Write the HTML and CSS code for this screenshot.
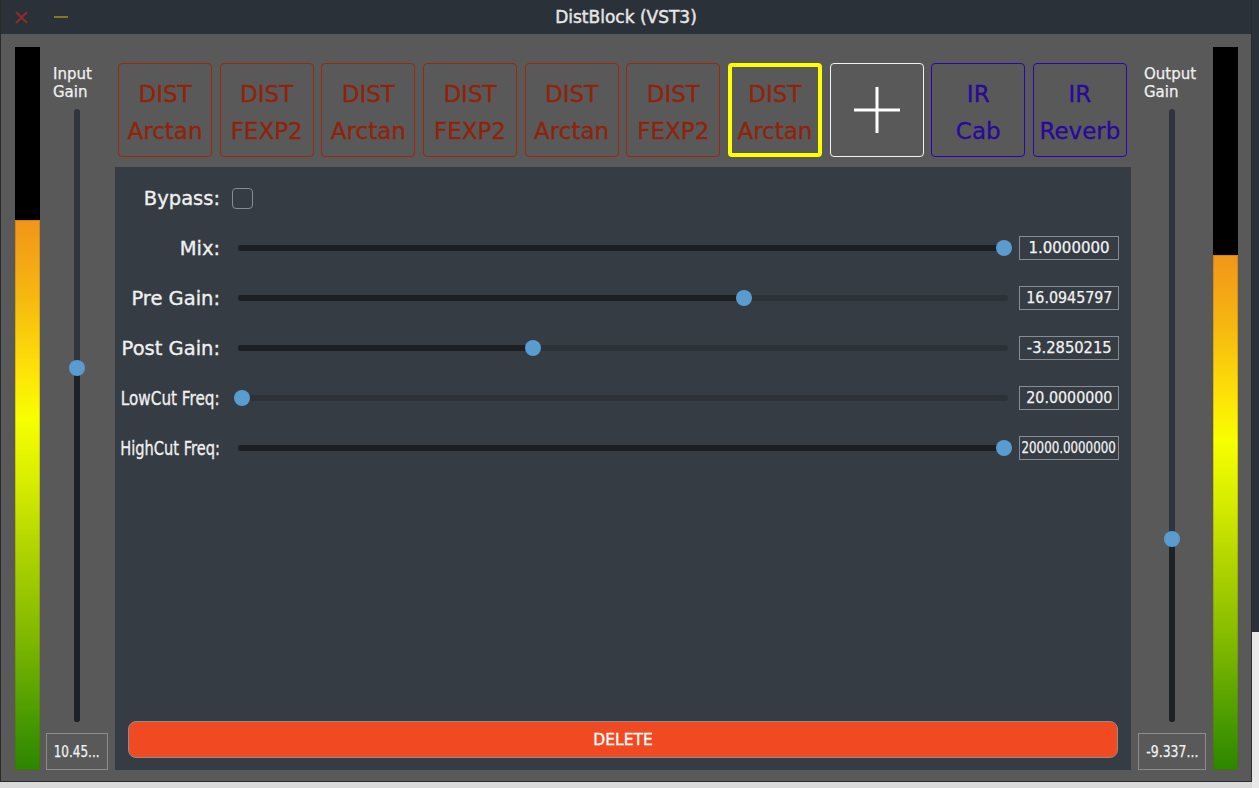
FILE: index.html
```html
<!DOCTYPE html>
<html>
<head>
<meta charset="utf-8">
<title>DistBlock (VST3)</title>
<link rel="stylesheet" href="styles.css">
</head>
<body>
<div class="desktop">
  <div class="window">
    <div class="titlebar">
      <div class="tb-controls">
        <svg class="tb-close" width="13" height="13" viewBox="0 0 13 13"><path d="M1 1 L12 12 M12 1 L1 12" stroke="#8e2b2b" stroke-width="2" fill="none"/></svg>
        <span class="tb-min"></span>
      </div>
      <div class="tb-title">DistBlock (VST3)</div>
      <div></div>
    </div>
    <div class="content">
      <div class="meter"><div class="meter-fill" style="--level:0.761"></div></div>
      <div class="gain-col">
        <div class="gain-label">Input<br>Gain</div>
        <div class="vslider" style="--v:0.578">
          <div class="vtrack"><div class="vfill"></div></div>
          <div class="vthumb"></div>
        </div>
        <div class="gain-value"><span class="sq80">10.45...</span></div>
      </div>
      <div class="center">
        <div class="chain">
          <button class="mod dist">DIST<br>Arctan</button>
          <button class="mod dist">DIST<br>FEXP2</button>
          <button class="mod dist">DIST<br>Arctan</button>
          <button class="mod dist">DIST<br>FEXP2</button>
          <button class="mod dist">DIST<br>Arctan</button>
          <button class="mod dist">DIST<br>FEXP2</button>
          <button class="mod dist selected">DIST<br>Arctan</button>
          <button class="mod add"><svg width="48" height="48" viewBox="0 0 48 48"><path d="M24 1 V47 M1 24 H47" stroke="#ffffff" stroke-width="3" fill="none"/></svg></button>
          <button class="mod ir">IR<br>Cab</button>
          <button class="mod ir">IR<br>Reverb</button>
        </div>
        <div class="panel">
          <div class="row">
            <div class="plabel"><span>Bypass:</span></div>
            <div class="checkbox"></div>
          </div>
          <div class="row">
            <div class="plabel"><span>Mix:</span></div>
            <div class="hslider" style="--v:1"><div class="htrack"><div class="hfill"></div></div><div class="hthumb"></div></div>
            <div class="pvalue">1.0000000</div>
          </div>
          <div class="row">
            <div class="plabel"><span>Pre Gain:</span></div>
            <div class="hslider" style="--v:0.659"><div class="htrack"><div class="hfill"></div></div><div class="hthumb"></div></div>
            <div class="pvalue"><span class="sq95">16.0945797</span></div>
          </div>
          <div class="row">
            <div class="plabel"><span>Post Gain:</span></div>
            <div class="hslider" style="--v:0.382"><div class="htrack"><div class="hfill"></div></div><div class="hthumb"></div></div>
            <div class="pvalue"><span class="sq98">-3.2850215</span></div>
          </div>
          <div class="row">
            <div class="plabel"><span class="sq78">LowCut Freq:</span></div>
            <div class="hslider" style="--v:0"><div class="htrack"><div class="hfill"></div></div><div class="hthumb"></div></div>
            <div class="pvalue"><span class="sq95">20.0000000</span></div>
          </div>
          <div class="row">
            <div class="plabel"><span class="sq75">HighCut Freq:</span></div>
            <div class="hslider" style="--v:1"><div class="htrack"><div class="hfill"></div></div><div class="hthumb"></div></div>
            <div class="pvalue"><span class="sq79">20000.0000000</span></div>
          </div>
          <button class="delete">DELETE</button>
        </div>
      </div>
      <div class="gain-col right">
        <div class="gain-label">Output<br>Gain</div>
        <div class="vslider" style="--v:0.296">
          <div class="vtrack"><div class="vfill"></div></div>
          <div class="vthumb"></div>
        </div>
        <div class="gain-value"><span class="sq83">-9.337...</span></div>
      </div>
      <div class="meter right"><div class="meter-fill" style="--level:0.712"></div></div>
    </div>
  </div>
  <div class="side"><div class="side-dark"></div><div class="side-light"></div></div>
</div>
</body>
</html>
```

FILE: styles.css
```css
* { box-sizing: border-box; margin: 0; padding: 0; }
html, body { width: 100%; height: 100%; }
body {
  background: #dadada;
  font-family: "DejaVu Sans", "Liberation Sans", sans-serif;
  overflow: hidden;
}
.desktop { display: flex; align-items: flex-start; height: 788px; }

.window {
  width: 1252px;
  height: 782px;
  border: 1px solid #2a2a2a;
  border-top: 0;
  display: flex;
  flex-direction: column;
  background: #595959;
  flex: none;
}

.side { flex: 1; display: flex; flex-direction: column; height: 788px; }
.side-dark { height: 632px; background: #2b3138; }
.side-light { flex: 1; background: #e9e9e9; }

/* title bar */
.titlebar {
  height: 34px;
  background: #2b3139;
  display: grid;
  grid-template-columns: 1fr auto 1fr;
  align-items: center;
  flex: none;
}
.tb-controls { display: flex; align-items: center; padding-left: 14px; }
.tb-close { display: block; }
.tb-min { display: block; width: 14px; height: 2px; background: #7d7a26; margin-left: 26px; }
.tb-title { color: #e6e6e6; font-size: 17px; -webkit-text-stroke: 0.45px #e6e6e6; }

/* content */
.content {
  flex: 1;
  display: flex;
  padding: 13px 13px 11px 14px;
}

.meter {
  width: 25px;
  background: #000;
  display: flex;
  flex-direction: column;
  justify-content: flex-end;
  flex: none;
}
.meter.right { margin-left: 7px; }
.meter-fill {
  height: calc(var(--level) * 100%);
  background: linear-gradient(to bottom,
    #f2951a 0%, #f6b810 14%, #fde408 28%, #f8ff00 36%, #d6ec00 48%,
    #b0d400 60%, #7fb800 76%, #4c9c00 90%, #2c8600 100%);
  box-shadow: inset 0 0 0 1px rgba(120, 70, 0, 0.25);
}

.gain-col {
  width: 62px;
  margin-left: 6px;
  display: flex;
  flex-direction: column;
  flex: none;
}
.gain-col.right { width: 68px; margin-left: 7px; }
.gain-label {
  margin-top: 18px;
  padding-left: 7px;
  font-size: 15px;
  line-height: 18px;
  color: #f0f0f0;
  -webkit-text-stroke: 0.25px #f0f0f0;
}
.gain-col.right .gain-label { padding-left: 6px; }
.vslider {
  flex: 1;
  margin-top: 8px;
  position: relative;
  display: flex;
  justify-content: center;
}
.vtrack {
  width: 6px;
  height: 100%;
  border-radius: 3px;
  background: #2e353c;
  position: relative;
  overflow: hidden;
}
.vfill {
  position: absolute;
  left: 0; right: 0; bottom: 0;
  height: calc(4px + var(--v) * (100% - 8px));
  background: #1d2227;
}
.vthumb {
  position: absolute;
  left: 50%;
  margin-left: -8px;
  width: 16px;
  height: 16px;
  border-radius: 50%;
  background: #5a9bd0;
  top: calc(4px + (1 - var(--v)) * (100% - 8px) - 8px);
}
.gain-value {
  margin-top: 11px;
  height: 37px;
  border: 1px solid #8c8c8c;
  display: flex;
  align-items: center;
  justify-content: center;
  font-size: 15px;
  color: #f2f2f2;
  white-space: nowrap;
  -webkit-text-stroke: 0.25px #f2f2f2;
}

.sq80, .sq83, .sq79, .sq78, .sq75, .sq95, .sq98 { display: inline-block; white-space: nowrap; flex: none; }
.sq80 { transform: scaleX(0.8); }
.sq83 { transform: scaleX(0.83); }
.sq79 { transform: scaleX(0.79); }
.sq95 { transform: scaleX(0.95); }
.sq98 { transform: scaleX(0.98); }
.sq78 { transform: scaleX(0.78); transform-origin: right center; }
.sq75 { transform: scaleX(0.75); transform-origin: right center; }

/* center column */
.center {
  width: 1016px;
  margin-left: 7px;
  display: flex;
  flex-direction: column;
  flex: none;
}
.chain {
  margin-top: 16px;
  padding: 0 4px 0 3px;
  display: flex;
  justify-content: space-between;
  flex: none;
}
.mod {
  width: 94px;
  height: 94px;
  border-radius: 4px;
  background: transparent;
  font-family: "DejaVu Sans", "Liberation Sans", sans-serif;
  font-size: 23px;
  line-height: 37px;
  padding-top: 5px;
  display: flex;
  flex-direction: column;
  align-items: center;
  justify-content: center;
  text-align: center;
}
.mod.dist { border: 1px solid #98290f; color: #8f230c; -webkit-text-stroke: 0.3px #8f230c; }
.mod.selected { border: 4px solid #ffff00; }
.mod.add { border: 1px solid #f2f2f2; padding-top: 0; }
.mod.add svg { display: block; }
.mod.ir { border: 1px solid #2a04b4; color: #28099a; -webkit-text-stroke: 0.3px #28099a; }

.panel {
  flex: 1;
  margin-top: 10px;
  background: #353c44;
  display: flex;
  flex-direction: column;
  padding-top: 6px;
}
.row {
  height: 50px;
  display: flex;
  align-items: center;
  padding-right: 12px;
  flex: none;
}
.plabel {
  width: 105px;
  display: flex;
  justify-content: flex-end;
  font-size: 19.5px;
  color: #f0f0f0;
  white-space: nowrap;
  flex: none;
  -webkit-text-stroke: 0.35px #f0f0f0;
}
.plabel span { flex: none; }
.checkbox {
  margin-left: 12px;
  width: 21px;
  height: 21px;
  border: 1.5px solid #868c93;
  border-radius: 4px;
}
.hslider {
  flex: 1;
  margin-left: 18px;
  height: 16px;
  position: relative;
  display: flex;
  align-items: center;
}
.htrack {
  width: 100%;
  height: 6px;
  border-radius: 3px;
  background: #2c3238;
  position: relative;
  overflow: hidden;
}
.hfill {
  position: absolute;
  top: 0; bottom: 0; left: 0;
  width: calc(4px + var(--v) * (100% - 8px));
  background: #1c2024;
}
.hthumb {
  position: absolute;
  top: 0;
  width: 16px;
  height: 16px;
  border-radius: 50%;
  background: #5a9bd0;
  left: calc(4px + var(--v) * (100% - 8px) - 8px);
}
.pvalue {
  margin-left: 11px;
  width: 100px;
  height: 24px;
  border: 1px solid #878c91;
  display: flex;
  align-items: center;
  justify-content: center;
  font-size: 15px;
  color: #f2f2f2;
  white-space: nowrap;
  flex: none;
  -webkit-text-stroke: 0.25px #f2f2f2;
}

.delete {
  margin: auto 13px 12px 13px;
  height: 37px;
  background: #f14a22;
  border: 1px solid #8d8d8d;
  border-radius: 8px;
  color: #ffffff;
  font-family: "DejaVu Sans", "Liberation Sans", sans-serif;
  font-size: 15.5px;
  -webkit-text-stroke: 0.3px #ffffff;
  flex: none;
}
```
